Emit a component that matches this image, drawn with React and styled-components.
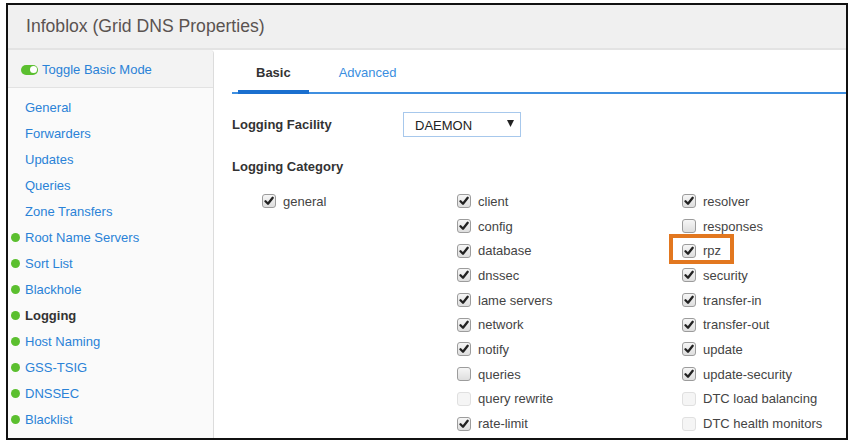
import React from 'react';
import styled, { createGlobalStyle } from 'styled-components';

const GlobalStyle = createGlobalStyle`
  body {
    margin: 0;
    background: #fff;
    font-family: "Liberation Sans", Arial, sans-serif;
  }
`;

const navItems = [
  { label: 'General' },
  { label: 'Forwarders' },
  { label: 'Updates' },
  { label: 'Queries' },
  { label: 'Zone Transfers' },
  { label: 'Root Name Servers', dot: true },
  { label: 'Sort List', dot: true },
  { label: 'Blackhole', dot: true },
  { label: 'Logging', dot: true, active: true },
  { label: 'Host Naming', dot: true },
  { label: 'GSS-TSIG', dot: true },
  { label: 'DNSSEC', dot: true },
  { label: 'Blacklist', dot: true },
];

// state: 'on' | 'off' | 'disabled'
const columns = [
  { width: 195, items: [{ label: 'general', state: 'on' }] },
  {
    width: 225,
    items: [
      { label: 'client', state: 'on' },
      { label: 'config', state: 'on' },
      { label: 'database', state: 'on' },
      { label: 'dnssec', state: 'on' },
      { label: 'lame servers', state: 'on' },
      { label: 'network', state: 'on' },
      { label: 'notify', state: 'on' },
      { label: 'queries', state: 'off' },
      { label: 'query rewrite', state: 'disabled' },
      { label: 'rate-limit', state: 'on' },
    ],
  },
  {
    width: 160,
    items: [
      { label: 'resolver', state: 'on' },
      { label: 'responses', state: 'off' },
      { label: 'rpz', state: 'on', highlight: true },
      { label: 'security', state: 'on' },
      { label: 'transfer-in', state: 'on' },
      { label: 'transfer-out', state: 'on' },
      { label: 'update', state: 'on' },
      { label: 'update-security', state: 'on' },
      { label: 'DTC load balancing', state: 'disabled' },
      { label: 'DTC health monitors', state: 'disabled' },
    ],
  },
];

const CheckMark = () => (
  <svg width="10" height="10" viewBox="0 0 10 10">
    <path d="M1.5 5.3 L4 7.8 L8.7 1.8" fill="none" stroke="#222" strokeWidth="2.3" strokeLinecap="round" strokeLinejoin="round" />
  </svg>
);

const App = () => {
  return (
    <>
      <GlobalStyle />
      <Frame>
        <Header>
          <Title>Infoblox (Grid DNS Properties)</Title>
        </Header>
        <Main>
          <Sidebar>
            <ToggleRow>
              <Switch />
              <LinkText>Toggle Basic Mode</LinkText>
            </ToggleRow>
            <Nav>
              {navItems.map((item) => (
                <NavItem key={item.label}>
                  <Dot $on={item.dot} />
                  <NavLabel $active={item.active}>{item.label}</NavLabel>
                </NavItem>
              ))}
            </Nav>
          </Sidebar>
          <Content>
            <TabBar>
              <Tab $active>Basic</Tab>
              <Tab>Advanced</Tab>
            </TabBar>
            <Body>
              <FieldRow>
                <FieldLabel>Logging Facility</FieldLabel>
                <Select>
                  DAEMON
                  <svg width="7" height="7" viewBox="0 0 7 7">
                    <path d="M0 0 H7 L3.5 7 Z" fill="#222" />
                  </svg>
                </Select>
              </FieldRow>
              <SectionLabel>Logging Category</SectionLabel>
              <CheckGrid>
                {columns.map((col, i) => (
                  <Column key={i} $width={col.width}>
                    {col.items.map((it) => (
                      <CheckRow key={it.label}>
                        {it.highlight && <Highlight />}
                        <Box $state={it.state}>{it.state === 'on' && <CheckMark />}</Box>
                        <CheckLabel>{it.label}</CheckLabel>
                      </CheckRow>
                    ))}
                  </Column>
                ))}
              </CheckGrid>
            </Body>
          </Content>
        </Main>
      </Frame>
    </>
  );
};

const Frame = styled.div`
  margin: 3px 0 0 6px;
  width: 842px;
  height: 437px;
  border: 2px solid #111;
  box-sizing: border-box;
  overflow: hidden;
  display: flex;
  flex-direction: column;
  background: #fff;
`;

const Header = styled.div`
  height: 45px;
  flex-shrink: 0;
  box-sizing: border-box;
  background: #f0f0f0;
  border-bottom: 2px solid #e3e3e3;
  padding-left: 18px;
  display: flex;
  align-items: center;
`;

const Title = styled.h1`
  margin: 0;
  font-size: 17.6px;
  font-weight: 400;
  color: #5a5350;
`;

const Main = styled.div`
  flex: 1;
  display: flex;
  min-height: 0;
`;

const Sidebar = styled.div`
  width: 206px;
  flex-shrink: 0;
  box-sizing: border-box;
  background: #fafafa;
  border-right: 1px solid #dcdcdc;
  border-top-right-radius: 4px;
`;

const ToggleRow = styled.div`
  height: 38px;
  box-sizing: border-box;
  padding: 2px 0 0 13px;
  display: flex;
  align-items: center;
  gap: 4px;
  background: #f3f3f3;
  border-bottom: 1px solid #e2e2e2;
  border-top-right-radius: 4px;
`;

const Switch = styled.span`
  position: relative;
  width: 17px;
  height: 10px;
  border-radius: 5px;
  background: #5bbf2f;
  flex-shrink: 0;

  &::after {
    content: '';
    position: absolute;
    right: 1.5px;
    top: 1.5px;
    width: 7px;
    height: 7px;
    border-radius: 50%;
    background: #fff;
  }
`;

const LinkText = styled.span`
  font-size: 13px;
  color: #2a82d7;
`;

const Nav = styled.div`
  padding-top: 6px;
  display: flex;
  flex-direction: column;
`;

const NavItem = styled.div`
  height: 26px;
  display: flex;
  align-items: center;
  gap: 5px;
  padding-left: 3px;
`;

const Dot = styled.span`
  width: 9px;
  height: 9px;
  border-radius: 50%;
  flex-shrink: 0;
  background: ${(p) => (p.$on ? '#5bbf2f' : 'transparent')};
`;

const NavLabel = styled.span`
  font-size: 13px;
  color: ${(p) => (p.$active ? '#333' : '#2a82d7')};
  font-weight: ${(p) => (p.$active ? 700 : 400)};
`;

const Content = styled.div`
  flex: 1;
  background: #fff;
`;

const TabBar = styled.div`
  margin-left: 18px;
  height: 44px;
  box-sizing: border-box;
  border-bottom: 2px solid #3f8fe0;
  padding-left: 6px;
  display: flex;
  gap: 12px;
`;

const Tab = styled.div`
  height: 44px;
  box-sizing: border-box;
  margin-bottom: -2px;
  padding: 4px 18px 0;
  display: flex;
  align-items: center;
  font-size: 13px;
  font-weight: ${(p) => (p.$active ? 700 : 400)};
  color: ${(p) => (p.$active ? '#333' : '#3a8ee0')};
  border-bottom: 4px solid ${(p) => (p.$active ? '#1a6fcf' : 'transparent')};
`;

const Body = styled.div`
  padding: 18px 0 0 18px;
`;

const FieldRow = styled.div`
  display: flex;
  align-items: center;
  height: 25px;
`;

const FieldLabel = styled.span`
  width: 171px;
  font-size: 13px;
  font-weight: 700;
  color: #333;
`;

const Select = styled.div`
  width: 118px;
  height: 25px;
  box-sizing: border-box;
  border: 1px solid #a7c8ec;
  padding: 2px 6px 0 11px;
  display: flex;
  align-items: center;
  justify-content: space-between;
  font-size: 13px;
  color: #222;

  svg {
    margin-top: -4px;
  }
`;

const SectionLabel = styled.div`
  margin-top: 21px;
  line-height: 18px;
  font-size: 13px;
  font-weight: 700;
  color: #333;
`;

const CheckGrid = styled.div`
  margin: 13px 0 0 30px;
  display: flex;
`;

const Column = styled.div`
  width: ${(p) => p.$width}px;
  display: flex;
  flex-direction: column;
`;

const CheckRow = styled.div`
  position: relative;
  height: 24.7px;
  display: flex;
  align-items: center;
  gap: 7px;
`;

const Box = styled.span`
  width: 14px;
  height: 14px;
  box-sizing: border-box;
  border-radius: 3px;
  flex-shrink: 0;
  display: flex;
  align-items: center;
  justify-content: center;
  border: 1px solid ${(p) => (p.$state === 'disabled' ? '#e0e0e0' : '#9c9c9c')};
  background: ${(p) =>
    p.$state === 'disabled' ? '#f5f5f5' : 'linear-gradient(#f6f6f6, #dedede)'};
`;

const CheckLabel = styled.span`
  font-size: 13px;
  color: #444;
  white-space: nowrap;
`;

const Highlight = styled.span`
  position: absolute;
  left: -13px;
  top: -4px;
  width: 65px;
  height: 30px;
  box-sizing: border-box;
  border: 4px solid #e2771f;
`;

export default App;
